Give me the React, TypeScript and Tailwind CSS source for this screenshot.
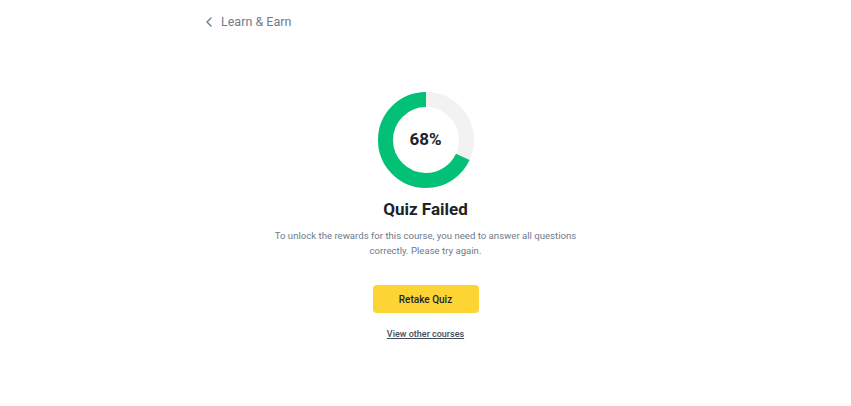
import { ChevronLeft } from "lucide-react"

function ScoreRing({ value }: { value: number }) {
  const r = 40.5
  const c = 2 * Math.PI * r
  return (
    <div className="relative w-[96px] h-[96px]">
      <svg width="96" height="96" viewBox="0 0 96 96">
        <circle cx="48" cy="48" r={r} fill="none" stroke="#f2f2f2" strokeWidth="15" />
        <circle
          cx="48"
          cy="48"
          r={r}
          fill="none"
          stroke="#02c076"
          strokeWidth="15"
          strokeDasharray={`${(c * value) / 100} ${c}`}
          transform="translate(96 0) scale(-1 1) rotate(-90 48 48)"
        />
      </svg>
      <div className="absolute inset-0 flex items-center justify-center text-[17px] font-bold text-[#1e2329]">
        {value}%
      </div>
    </div>
  )
}

export default function App() {
  return (
    <div className="w-[851px] h-[406px] bg-white font-['Roboto','Noto_Sans',sans-serif]">
      <div className="pt-[13px] pl-[201px] flex items-center gap-[4px] text-[#707a8a]">
        <ChevronLeft className="w-[16px] h-[16px]" strokeWidth={2} />
        <span className="text-[12.5px] leading-[18px]">Learn &amp; Earn</span>
      </div>

      <div className="flex flex-col items-center mt-[61px]">
        <ScoreRing value={68} />
        <h1 className="mt-[9px] text-[17px] leading-[24px] font-bold text-[#1e2329]">Quiz Failed</h1>
        <p className="mt-[7px] w-[310px] text-center text-[9.6px] leading-[15px] text-[#707a8a]">
          To unlock the rewards for this course, you need to answer all questions correctly. Please try again.
        </p>
        <button className="mt-[27px] w-[106px] h-[28px] rounded-[4px] bg-[#fcd535] text-[10px] font-medium text-[#1e2329]">
          Retake Quiz
        </button>
        <a href="#" className="mt-[15px] text-[9px] leading-[12px] font-medium text-[#474d57] underline">
          View other courses
        </a>
      </div>
    </div>
  )
}
